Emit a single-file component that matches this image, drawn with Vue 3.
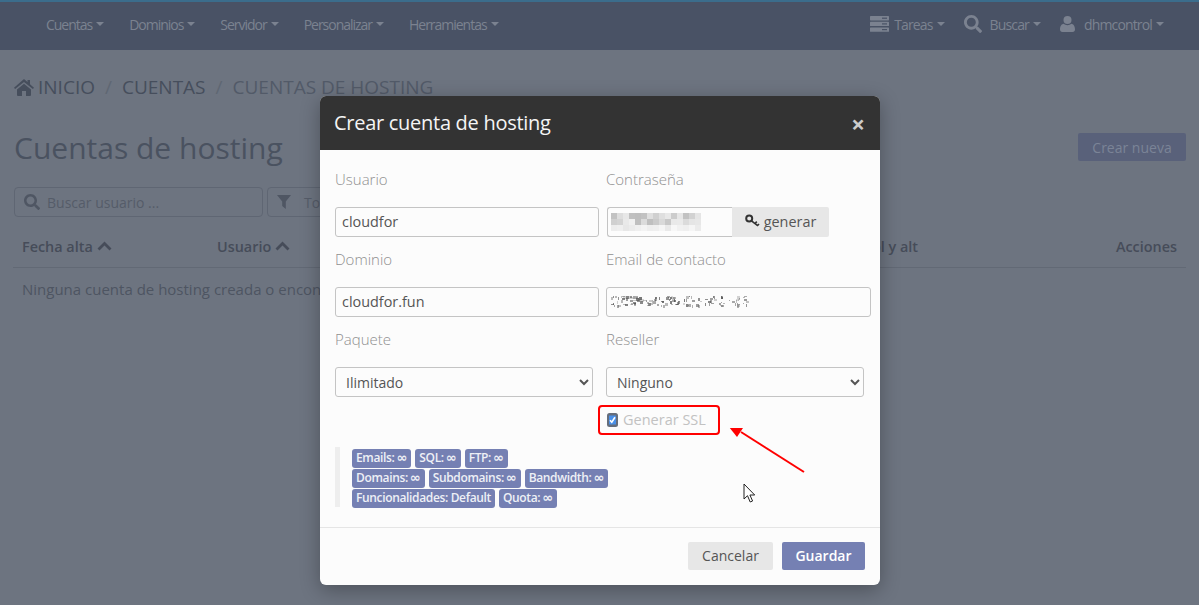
<script setup>
const leftNav = ['Cuentas', 'Dominios', 'Servidor', 'Personalizar', 'Herramientas']
const searchPath = 'M505 442.7L405.3 343c-4.5-4.5-10.6-7-17-7H372c27.6-35.3 44-79.7 44-128C416 93.1 322.9 0 208 0S0 93.1 0 208s93.1 208 208 208c48.3 0 92.7-16.4 128-44v16.3c0 6.4 2.5 12.5 7 17l99.7 99.7c9.4 9.4 24.6 9.4 33.9 0l28.3-28.3c9.4-9.4 9.4-24.6.1-34zM208 336c-70.7 0-128-57.2-128-128 0-70.7 57.2-128 128-128 70.7 0 128 57.2 128 128 0 70.7-57.2 128-128 128z'
const badgeRows = [
  [['Emails:', '∞'], ['SQL:', '∞'], ['FTP:', '∞']],
  [['Domains:', '∞'], ['Subdomains:', '∞'], ['Bandwidth:', '∞']],
  [['Funcionalidades: Default', ''], ['Quota:', '∞']]
]
const rnd = (n) => {
  const v = Math.sin(n * 12.9898) * 43758.5453
  return v - Math.floor(v)
}
// pixelated blur of the password
const passBlocks = []
for (let y = 0; y < 3; y++) {
  for (let x = 0; x < 15; x++) {
    const fade = y === 2 ? 0.35 : 1
    passBlocks.push([x * 6, y * 6, (0.07 + rnd(x * 3 + y * 17 + 1) * 0.3) * fade])
  }
}
// scrambled specks for the e-mail
const mailSpecks = []
for (let i = 0; i < 140; i++) {
  const x = Math.floor(rnd(i + 1) * 136)
  if ((x > 67 && x < 71) || (x > 103 && x < 107)) continue
  mailSpecks.push([x, 2 + Math.floor(rnd(i + 50) * 10), 1 + Math.floor(rnd(i + 90) * 3), 1 + Math.floor(rnd(i + 130) * 3), 0.2 + rnd(i + 170) * 0.6])
}
</script>

<template>
  <div class="page">
    <header class="topbar">
      <nav class="nav-left">
        <a v-for="n in leftNav" :key="n" class="nav-item">{{ n }}<i class="caret"></i></a>
      </nav>
      <nav class="nav-right">
        <a class="nav-item">
          <svg class="nav-ico" width="19" height="16" viewBox="0 0 19 16"><g fill="#7b8290"><rect x="0" y="0" width="19" height="4.400" rx=".6"/><rect x="0" y="5.700" width="19" height="4.400" rx=".6"/><rect x="0" y="11.400" width="19" height="4.400" rx=".6"/></g><g fill="#495265"><rect x="12" y="1.600" width="5" height="1.200"/><rect x="12" y="7.300" width="5" height="1.200"/><rect x="12" y="13" width="5" height="1.200"/></g></svg>
          Tareas<i class="caret"></i>
        </a>
        <a class="nav-item">
          <svg class="nav-ico s" width="18" height="18" viewBox="0 0 512 512"><path fill="#7b8290" :d="searchPath"/></svg>
          Buscar<i class="caret"></i>
        </a>
        <a class="nav-item">
          <svg class="nav-ico u" width="15" height="16" viewBox="0 0 15 16"><circle cx="7.500" cy="4" r="4" fill="#7b8290"/><path fill="#7b8290" d="M0 13.500C0 9.500 2 8 3.600 7.800 4.600 8.700 6 9.200 7.500 9.200s2.900-.5 3.900-1.400C13 8 15 9.500 15 13.500 15 15 14 16 12.700 16H2.300C1 16 0 15 0 13.500z"/></svg>
          dhmcontrol<i class="caret"></i>
        </a>
      </nav>
    </header>

    <main class="content">
      <div class="crumbs">
        <svg class="home" width="20" height="17" viewBox="0 0 20 17"><path fill="#464e5c" d="M10 0l3.500 3V1h2.500v4.200L20 8.700l-1.100 1.200L10 3 1.100 9.900 0 8.700zM3 10.500l7-5.800 7 5.800V16a1 1 0 0 1-1 1h-4v-5H8v5H4a1 1 0 0 1-1-1z"/></svg>
        <span class="c1">INICIO</span><span class="sep">/</span><span class="c1">CUENTAS</span><span class="sep">/</span><span class="c2">CUENTAS DE HOSTING</span>
      </div>
      <div class="title-row">
        <h1>Cuentas de hosting</h1>
        <button class="create">Crear nueva</button>
      </div>
      <div class="filters">
        <div class="fbox search">
          <svg width="16" height="16" viewBox="0 0 512 512"><path fill="#4f5663" :d="searchPath"/></svg>
          <span>Buscar usuario ...</span>
        </div>
        <div class="fbox filter">
          <svg width="14" height="14" viewBox="0 0 14 14"><path fill="#4f5663" d="M0 0h14L8.800 6.500V14L5.200 11V6.500z"/></svg>
          <span>Todos</span>
        </div>
      </div>
      <div class="thead">
        <span class="th w1">Fecha alta
          <svg width="15" height="10" viewBox="0 0 15 10"><path d="M1.500 8.500L7.500 2.500l6 6" fill="none" stroke="#464c59" stroke-width="2.800"/></svg>
        </span>
        <span class="th w2">Usuario
          <svg width="15" height="10" viewBox="0 0 15 10"><path d="M1.500 8.500L7.500 2.500l6 6" fill="none" stroke="#464c59" stroke-width="2.800"/></svg>
        </span>
        <span class="th w3">Control y alt</span>
        <span class="th w4">Acciones</span>
      </div>
      <div class="empty">Ninguna cuenta de hosting creada o encontrada</div>
    </main>

    <section class="modal">
      <div class="m-head">
        <h2>Crear cuenta de hosting</h2>
        <span class="close">×</span>
      </div>
      <div class="m-body">
        <div class="rows">
          <div class="field">
            <label>Usuario</label>
            <input class="ctl w264" value="cloudfor" />
          </div>
          <div class="field">
            <label>Contraseña</label>
            <div class="pass-group">
              <div class="ctl pass">
                <svg width="90" height="18" viewBox="0 0 90 18"><rect v-for="(b, i) in passBlocks" :key="i" :x="b[0]" :y="b[1]" width="6" height="6" fill="#555" :opacity="b[2]"/></svg>
              </div>
              <button class="gen">
                <svg width="15" height="14" viewBox="0 0 15 14"><circle cx="4.200" cy="4.500" r="3" fill="none" stroke="#333" stroke-width="2"/><path d="M6.500 6.800l6.500 5M10 9.500l1.800-1.800M12.500 11.500l1.500-1.500" fill="none" stroke="#333" stroke-width="1.700"/></svg>
                generar
              </button>
            </div>
          </div>
          <div class="field">
            <label>Dominio</label>
            <input class="ctl w264" value="cloudfor.fun" />
          </div>
          <div class="field">
            <label>Email de contacto</label>
            <div class="ctl mail">
              <svg width="140" height="15" viewBox="0 0 140 15"><rect v-for="(s, i) in mailSpecks" :key="i" :x="s[0]" :y="s[1]" :width="s[2]" :height="s[3]" fill="#555" :opacity="s[4]"/></svg>
            </div>
          </div>
          <div class="field">
            <label>Paquete</label>
            <select class="ctl sel w258"><option>Ilimitado</option></select>
          </div>
          <div class="field">
            <label>Reseller</label>
            <select class="ctl sel w258"><option>Ninguno</option></select>
          </div>
        </div>

        <div class="ssl-row">
          <div class="ssl-box">
            <svg width="11" height="14" viewBox="0 0 11 14"><rect x="0" y="0" width="11" height="14" rx="2.500" fill="#666e7c"/><rect x="2" y="2.500" width="7" height="9" rx=".5" fill="#4a90e8"/><path d="M3 7.200l1.800 2L8 4.300" fill="none" stroke="#fff" stroke-width="1.600"/></svg>
            <span>Generar SSL</span>
          </div>
        </div>

        <div class="quote">
          <div v-for="(row, r) in badgeRows" :key="r" class="badge-row">
            <span v-for="b in row" :key="b[0]" class="badge">{{ b[0] }}<b v-if="b[1]" class="inf">{{ b[1] }}</b></span>
          </div>
        </div>
      </div>
      <div class="m-foot">
        <button class="btn cancel">Cancelar</button>
        <button class="btn save">Guardar</button>
      </div>
    </section>

    <svg class="arrow" width="90" height="60" viewBox="0 0 90 60">
      <path d="M75 44L12 4" stroke="#f00" stroke-width="2" fill="none"/>
      <path d="M0 -1L14 0L8 9z" fill="#f00"/>
    </svg>
    <svg class="cursor" width="14" height="21" viewBox="0 0 14 21">
      <path d="M1 1v15l3.500-3.300 2.700 6.300 2.400-1-2.700-6h4.800z" fill="#fff" stroke="#222" stroke-width="1"/>
    </svg>
  </div>
</template>

<style>
html, body { margin: 0; height: 100%; overflow: hidden; }
</style>

<style scoped>
* { box-sizing: border-box; }
.page {
  position: relative;
  width: 1199px;
  height: 605px;
  overflow: hidden;
  background: #6d7480;
  font-family: "Open Sans", sans-serif;
  font-size: 14.4px;
  color: #464c59;
}
.topbar {
  height: 50px;
  background: #495265;
  border-top: 2px solid #3b6d8c;
  display: flex;
  justify-content: space-between;
  align-items: center;
  padding: 0 35px 4px 46px;
  color: #7b8290;
}
.nav-left, .nav-right { display: flex; align-items: center; }
.nav-left { gap: 25px; }
.nav-right { gap: 19px; }
.nav-right .nav-item { letter-spacing: -.85px; }
.nav-item {
  display: flex;
  align-items: center;
  font-size: 14px;
  letter-spacing: -1.02px;
  white-space: nowrap;
}
.nav-ico { margin-right: 5px; }
.nav-ico.s { margin-right: 8px; }
.nav-ico.u { margin-right: 9px; }
.caret {
  display: inline-block;
  margin-left: 4px;
  border-top: 4px solid #7b8290;
  border-left: 4px solid transparent;
  border-right: 4px solid transparent;
}
.content { padding: 0 13px; }
.crumbs {
  display: flex;
  align-items: center;
  height: 28px;
  margin-top: 23px;
  padding-left: 1px;
  font-size: 19px;
}
.home { margin-right: 4px; }
.c1 { color: #464e5c; }
.c2 { color: #525a68; }
.sep { margin: 0 10px; color: #5f6773; }
.title-row {
  display: flex;
  justify-content: space-between;
  align-items: center;
  margin-top: 24px;
  height: 44px;
}
h1 {
  margin: 0;
  padding-left: 1px;
  font-size: 30px;
  font-weight: 400;
  color: #4a5260;
}
.create {
  width: 108px;
  height: 28px;
  border: 0;
  border-radius: 2px;
  background: #59617a;
  color: #7b8497;
  font: 14px "Open Sans", sans-serif;
}
.filters {
  display: flex;
  gap: 4px;
  margin-top: 18px;
  padding-left: 1px;
}
.fbox {
  height: 30px;
  border: 1px solid #5f6673;
  border-radius: 4px;
  display: flex;
  align-items: center;
  color: #555c69;
  font-size: 14px;
}
.search { width: 249px; padding-left: 9px; gap: 7px; }
.filter { width: 150px; padding-left: 9px; gap: 13px; }
.thead {
  position: relative;
  display: flex;
  height: 36px;
  margin-top: 15px;
  border-bottom: 1px solid #626975;
  font-weight: 600;
  align-items: center;
  padding-bottom: 7px;
}
.th { white-space: nowrap; display: flex; align-items: center; gap: 4px; }
.w1 { width: 204px; padding-left: 9px; }
.w2 { width: 480px; }
.w3 { width: 221px; justify-content: flex-end; }
.w4 { margin-left: auto; padding-right: 9px; }
.empty { padding: 11px 9px; color: #4e5562; font-size: 15px; white-space: nowrap; }

.modal {
  position: absolute;
  left: 320px;
  top: 96px;
  width: 560px;
  height: 489px;
  display: flex;
  flex-direction: column;
  border-radius: 6px;
  background: #fcfcfc;
  box-shadow: 0 5px 20px rgba(0, 0, 0, .3);
  overflow: hidden;
}
.m-head {
  height: 54px;
  flex: none;
  background: #333;
  display: flex;
  align-items: center;
  justify-content: space-between;
  padding: 0 15px 2px 14px;
  color: #fff;
}
h2 { margin: 0; font-size: 20px; font-weight: 400; color: #f5f5f5; letter-spacing: -.28px; }
.close { font-size: 24px; font-weight: 700; color: #ccc; line-height: 1; margin-top: 3px; }
.m-body { flex: 1; padding: 0 15px; }
.rows {
  display: grid;
  grid-template-columns: 271px 1fr;
  grid-auto-rows: 80px;
  padding-top: 19px;
}
.field { display: flex; flex-direction: column; }
label {
  height: 20px;
  line-height: 20px;
  margin-bottom: 18px;
  color: #8f8f8f;
  font-size: 15px;
  font-weight: 300;
}
.ctl {
  height: 30px;
  border: 1px solid #c4c4c4;
  border-radius: 3px;
  background: #fcfcfc;
  color: #555;
  font: 14.4px/26px "Open Sans", sans-serif;
  padding: 0 6px 2px;
  outline: none;
}
.w264 { width: 264px; }
.w258 { width: 258px; }
.sel { padding: 0 6px; font-size: 14px; }
.pass-group { display: flex; padding-left: 1px; }
.pass {
  width: 125px;
  padding: 5px 0 0 3px;
  border-radius: 3px 0 0 3px;
  border-right: 0;
  overflow: hidden;
}
.pass svg, .mail svg { display: block; }
.gen {
  width: 97px;
  height: 30px;
  border: 0;
  border-radius: 0 2px 2px 0;
  background: #e7e7e7;
  color: #555;
  font: 14.4px "Open Sans", sans-serif;
  display: flex;
  align-items: center;
  justify-content: center;
  gap: 4px;
  padding: 0 0 2px;
}
.mail { width: 265px; padding: 6px 0 0 4px; }
.ssl-row { padding-left: 263px; margin-top: -4px; }
.ssl-box {
  width: 122px;
  height: 30px;
  border: 2px solid #f00;
  border-radius: 4px;
  display: flex;
  align-items: center;
  padding: 0 0 1px 7px;
  gap: 5px;
  color: #c2c2c2;
  font-size: 14.5px;
}
.quote {
  margin-top: 12px;
  height: 60px;
  border-left: 5px solid #eee;
  padding-left: 12px;
  padding-top: 2px;
  display: flex;
  flex-direction: column;
  gap: 1px;
}
.badge-row { display: flex; gap: 4px; height: 19px; }
.badge {
  height: 19px;
  padding: 0 4px;
  background: #7580b3;
  border-radius: 3px;
  color: #eef0f6;
  font-size: 12px;
  font-weight: 600;
  line-height: 18px;
  letter-spacing: -.35px;
  white-space: nowrap;
}
.inf {
  margin-left: 2px;
  font: 700 13px/17px "DejaVu Sans", sans-serif;
  letter-spacing: 0;
}
.m-foot {
  flex: none;
  height: 58px;
  border-top: 1px solid #e5e5e5;
  display: flex;
  justify-content: flex-end;
  gap: 9px;
  padding: 14px 15px 0 0;
}
.btn {
  height: 28px;
  border: 0;
  border-radius: 2px;
  font: 14px "Open Sans", sans-serif;
  padding: 0 0 2px;
}
.cancel { width: 85px; background: #e7e7e7; color: #555; }
.save { width: 83px; background: #7580b3; color: #fff; font-weight: 600; }
.arrow { position: absolute; left: 729px; top: 428px; }
.cursor { position: absolute; left: 743px; top: 483px; }
</style>
